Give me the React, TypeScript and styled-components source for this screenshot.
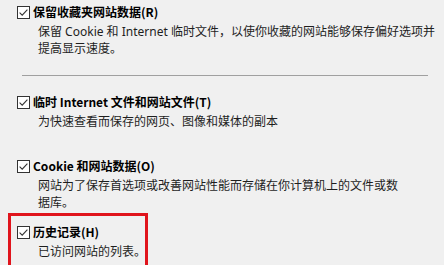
import React from "react";
import styled, { createGlobalStyle } from "styled-components";

const GlobalStyle = createGlobalStyle`
  html, body {
    margin: 0;
    padding: 0;
    background: #f0f0f0;
  }
  body {
    font-family: "Noto Sans CJK SC", "Noto Sans", sans-serif;
    color: #000;
  }
`;

const Page = styled.div`
  width: 444px;
  height: 265px;
  overflow: hidden;
  background: #f0f0f0;
  padding-top: 3px;
  box-sizing: border-box;
`;

const Section = styled.div<{ $gap?: number }>`
  padding-left: 17px;
  margin-top: ${(p) => p.$gap ?? 0}px;
`;

const Highlight = styled.div`
  margin-top: 2px;
  margin-left: 8px;
  width: 140px;
  box-sizing: border-box;
  border: 3px solid #e0141c;
  padding: 7px 0 8px 6px;
`;

const TitleRow = styled.label`
  display: flex;
  align-items: center;
  gap: 3px;
  height: 18px;
  font-size: 12px;
  font-weight: 700;
  line-height: 18px;
  white-space: nowrap;
`;

const Box = styled.svg`
  flex: 0 0 auto;
  width: 13px;
  height: 13px;
`;

const Desc = styled.div`
  margin-top: 2px;
  padding-left: 21px;
  font-family: "Noto Sans", "Noto Sans CJK SC", sans-serif;
  font-size: 12px;
  line-height: 17px;
  color: #1e1e1e;
  white-space: nowrap;
`;

const Divider = styled.div`
  margin: 18px 16px 0 22px;
  height: 1px;
  background: #a0a0a0;
`;

const Check = () => (
  <Box viewBox="0 0 13 13">
    <rect x="0.5" y="0.5" width="12" height="12" fill="#fff" stroke="#333" />
    <path d="M2.6 6.6 L5.2 9.2 L10.4 3.6" fill="none" stroke="#333" strokeWidth="1.1" />
  </Box>
);

interface ItemProps {
  title: string;
  lines: string[];
}

const Item: React.FC<ItemProps> = ({ title, lines }) => (
  <>
    <TitleRow>
      <Check />
      {title}
    </TitleRow>
    <Desc>
      {lines.map((l, i) => (
        <div key={i}>{l}</div>
      ))}
    </Desc>
  </>
);

export default function App() {
  return (
    <Page>
      <GlobalStyle />
      <Section>
        <Item
          title="保留收藏夹网站数据(R)"
          lines={[
            "保留 Cookie 和 Internet 临时文件，以使你收藏的网站能够保存偏好选项并",
            "提高显示速度。",
          ]}
        />
      </Section>
      <Divider />
      <Section $gap={17}>
        <Item
          title="临时 Internet 文件和网站文件(T)"
          lines={["为快速查看而保存的网页、图像和媒体的副本"]}
        />
      </Section>
      <Section $gap={27}>
        <Item
          title="Cookie 和网站数据(O)"
          lines={[
            "网站为了保存首选项或改善网站性能而存储在你计算机上的文件或数",
            "据库。",
          ]}
        />
      </Section>
      <Highlight>
        <Item title="历史记录(H)" lines={["已访问网站的列表。"]} />
      </Highlight>
    </Page>
  );
}
